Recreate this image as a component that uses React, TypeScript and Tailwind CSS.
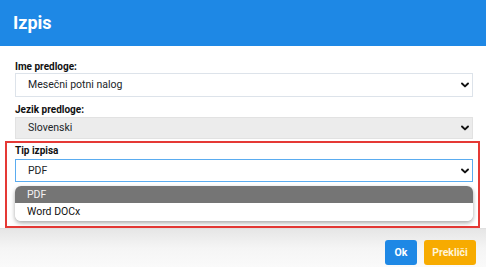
import React from "react";

function Chevron() {
  return (
    <svg width="8" height="6" viewBox="0 0 8 6" className="shrink-0">
      <path d="M1 1.5 L4 4.4 L7 1.5" fill="none" stroke="#111" strokeWidth="1.9" strokeLinecap="round" strokeLinejoin="round" />
    </svg>
  );
}

function FakeSelect({ value, className }: { value: string; className: string }) {
  return (
    <div className={`flex items-center justify-between pl-[12px] pr-[3px] border text-[10.5px] text-[#212529] ${className}`}>
      <span>{value}</span>
      <Chevron />
    </div>
  );
}

export default function App() {
  return (
    <div className="w-[486px] h-[267px] bg-white overflow-hidden flex flex-col" style={{ fontFamily: "Roboto, 'Liberation Sans', sans-serif" }}>
      <div className="h-[46px] shrink-0 bg-[#1e88e5] flex items-center pl-[13px]">
        <span className="text-white font-bold text-[18px] leading-none">Izpis</span>
      </div>
      <div className="flex flex-col pl-[15px] pr-[13px] pt-[15px] h-[182px] shrink-0 bg-white">
        <div className="text-[10px] font-bold text-[#111] leading-[12px] h-[12px]">Ime predloge:</div>
        <FakeSelect value="Mesečni potni nalog" className="h-[24px] bg-white border-[#dde3ea]" />
        <div className="mt-[7px] text-[10px] font-bold text-[#111] leading-[12px] h-[12px]">Jezik predloge:</div>
        <FakeSelect value="Slovenski" className="mt-[1px] h-[23px] bg-[#ececec] border-[#e2e2e2]" />
        <div className="mt-[2px] -ml-[10px] -mr-[7px] border-2 border-[#e53935] pl-[8px] pr-[5px] pt-[2px] h-[88px]">
          <div className="text-[10px] font-bold text-[#111] leading-[12px] h-[12px]">Tip izpisa</div>
          <FakeSelect value="PDF" className="mt-[2px] h-[23px] bg-white border-[#5aacf0]" />
          <div className="mt-[4px] rounded-[6px] overflow-hidden bg-white shadow-[0_2px_4px_rgba(0,0,0,0.35)] text-[10.5px]">
            <div className="h-[17px] bg-[#757575] text-[#f2f2f2] flex items-center pl-[12px]">PDF</div>
            <div className="h-[18px] bg-white text-[#111] flex items-center pl-[12px]">Word DOCx</div>
          </div>
        </div>
      </div>
      <div className="flex-1 border-t border-[#e0e0e0] bg-gradient-to-b from-[#e6e6e6] via-[#f5f5f5] to-[#fafafa] flex justify-end items-start pt-[11px] pr-[10px] gap-[7px]">
        <div className="h-[25px] w-[32px] rounded-[3px] bg-[#1e88e5] text-white text-[10.5px] font-bold flex items-center justify-center">Ok</div>
        <div className="h-[25px] w-[52px] rounded-[3px] bg-[#f7ab00] text-[#fff4d6] text-[10.5px] font-bold flex items-center justify-center">Prekliči</div>
      </div>
    </div>
  );
}
